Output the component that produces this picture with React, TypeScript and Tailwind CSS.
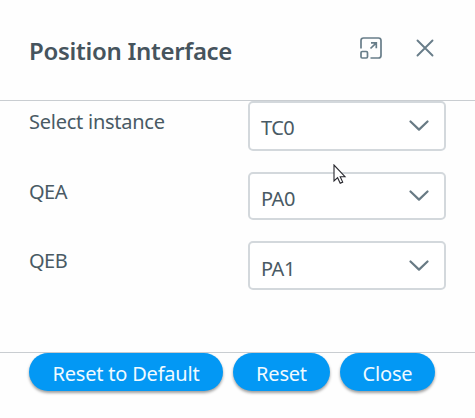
import React from "react";

function Chevron() {
  return (
    <svg width="20" height="12" viewBox="0 0 20 12" fill="none" className="shrink-0">
      <path d="M1.5 1.5 10 9.6l8.500-8.100" stroke="#687a84" strokeWidth="2.200" strokeLinecap="round" strokeLinejoin="round" />
    </svg>
  );
}

function Field({ label, value, box, labelClass, valueClass }: { label: string; value: string; box: string; labelClass: string; valueClass: string }) {
  return (
    <div className="flex items-start justify-between">
      <span className={`whitespace-nowrap leading-7 ${labelClass}`}>{label}</span>
      <button className={`flex w-[198px] items-center justify-between rounded-[5px] border-2 border-[#d3d8dc] bg-white pr-[15px] pl-[11px] ${box}`}>
        <span className={`leading-7 ${valueClass}`}>{value}</span>
        <Chevron />
      </button>
    </div>
  );
}

function Action({ label, className }: { label: string; className: string }) {
  return (
    <button className={`flex h-[38px] items-center justify-center rounded-full bg-[#0398f4] pt-[3px] whitespace-nowrap text-[#effaff] shadow-[0_2px_3px_rgba(0,0,0,0.38)] ${className}`}>
      {label}
    </button>
  );
}

export default function App() {
  return (
    <div className="flex h-[418px] w-[475px] flex-col overflow-hidden bg-[#fefefe] font-['Noto_Sans','Open_Sans',sans-serif] text-[20px] text-[#495a64]">
      <header className="flex h-[101px] items-start justify-between border-b border-[#c9cdd1] pr-[41px] pl-[29px]">
        <h1 className="mt-[34px] text-[24px] leading-[34px] font-semibold tracking-[-0.3px] whitespace-nowrap text-[#46545d]">Position Interface</h1>
        <div className="mt-[37px] flex items-center gap-[34px]">
          <svg width="22" height="22" viewBox="0 0 22 22" fill="none" stroke="#687d89" strokeWidth="1.700">
            <path d="M1 11.500V3.500Q1 1 3.500 1h15Q21 1 21 3.500v15q0 2.500-2.500 2.500h-8" />
            <rect x="1" y="14.500" width="6.500" height="6.500" rx="1.200" />
            <path d="M10.500 11.500 16.300 5.800M11 5.800h5.300v5.500" />
          </svg>
          <svg width="18" height="18" viewBox="0 0 18 18" fill="none" stroke="#687d89" strokeWidth="1.900" strokeLinecap="round">
            <path d="m1.500 1.500 15 15m0-15-15 15" />
          </svg>
        </div>
      </header>
      <main className="relative flex h-[251px] flex-col gap-[21px] pr-[29px] pl-[29px]">
        <Field label="Select instance" value="TC0" box="h-[50px]" labelClass="mt-[7px] tracking-[-0.25px]" valueClass="mt-[4px] tracking-[-0.5px]" />
        <Field label="QEA" value="PA0" box="h-[48px]" labelClass="mt-[6px] tracking-[-0.5px]" valueClass="mt-[6px] tracking-[-0.5px]" />
        <Field label="QEB" value="PA1" box="h-[49px]" labelClass="mt-[6px] tracking-[-0.5px]" valueClass="mt-[6px] tracking-[-0.5px]" />
        <svg className="absolute top-[63px] left-[333px]" width="14" height="21" viewBox="0 0 14 21">
          <path d="M1 1v16l3.600-3.300L7.200 19.200l2.500-1.100-2.500-5.400H12z" fill="white" stroke="#26262c" strokeWidth="1.100" />
        </svg>
      </main>
      <footer className="flex h-[66px] items-start border-t border-[#c9cdd1] pl-[29px]">
        <Action label="Reset to Default" className="w-[194px] tracking-[-0.2px]" />
        <Action label="Reset" className="ml-[10px] w-[97px] tracking-[-0.2px]" />
        <Action label="Close" className="ml-[10px] w-[95px] tracking-[-0.2px]" />
      </footer>
    </div>
  );
}
